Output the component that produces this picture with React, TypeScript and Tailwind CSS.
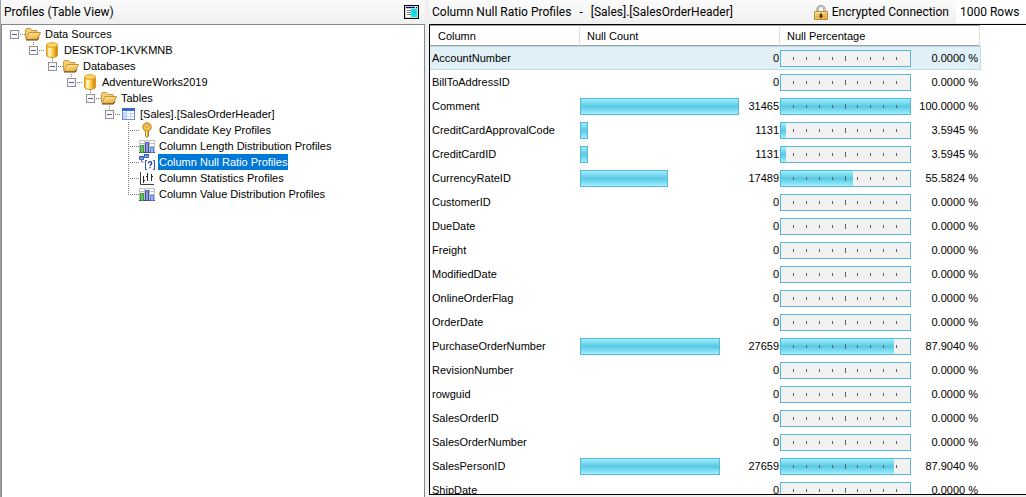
import { useState, type ReactNode } from 'react';

type IconName = 'folder' | 'database' | 'table' | 'key' | 'chart' | 'null' | 'stats';

type Node = { label: string; icon: IconName; children?: Node[] };

const tree: Node = {
  label: 'Data Sources',
  icon: 'folder',
  children: [
    {
      label: 'DESKTOP-1KVKMNB',
      icon: 'database',
      children: [
        {
          label: 'Databases',
          icon: 'folder',
          children: [
            {
              label: 'AdventureWorks2019',
              icon: 'database',
              children: [
                {
                  label: 'Tables',
                  icon: 'folder',
                  children: [
                    {
                      label: '[Sales].[SalesOrderHeader]',
                      icon: 'table',
                      children: [
                        { label: 'Candidate Key Profiles', icon: 'key' },
                        { label: 'Column Length Distribution Profiles', icon: 'chart' },
                        { label: 'Column Null Ratio Profiles', icon: 'null' },
                        { label: 'Column Statistics Profiles', icon: 'stats' },
                        { label: 'Column Value Distribution Profiles', icon: 'chart' },
                      ],
                    },
                  ],
                },
              ],
            },
          ],
        },
      ],
    },
  ],
};

const TOTAL = 31465;

const columns: [string, number, string][] = [
  ['AccountNumber', 0, '0.0000'],
  ['BillToAddressID', 0, '0.0000'],
  ['Comment', 31465, '100.0000'],
  ['CreditCardApprovalCode', 1131, '3.5945'],
  ['CreditCardID', 1131, '3.5945'],
  ['CurrencyRateID', 17489, '55.5824'],
  ['CustomerID', 0, '0.0000'],
  ['DueDate', 0, '0.0000'],
  ['Freight', 0, '0.0000'],
  ['ModifiedDate', 0, '0.0000'],
  ['OnlineOrderFlag', 0, '0.0000'],
  ['OrderDate', 0, '0.0000'],
  ['PurchaseOrderNumber', 27659, '87.9040'],
  ['RevisionNumber', 0, '0.0000'],
  ['rowguid', 0, '0.0000'],
  ['SalesOrderID', 0, '0.0000'],
  ['SalesOrderNumber', 0, '0.0000'],
  ['SalesPersonID', 27659, '87.9040'],
  ['ShipDate', 0, '0.0000'],
];

function Gradients() {
  return (
    <svg className="absolute size-0" aria-hidden="true">
      <defs>
        <linearGradient id="gold" x1="0" x2="1">
          <stop offset="0" stopColor="#f0a818" />
          <stop offset="0.35" stopColor="#fff0a0" />
          <stop offset="0.65" stopColor="#f8bc30" />
          <stop offset="1" stopColor="#c87808" />
        </linearGradient>
        <linearGradient id="leaf" x1="0" y1="0" x2="0.4" y2="1">
          <stop offset="0" stopColor="#fff0a0" />
          <stop offset="1" stopColor="#eeb040" />
        </linearGradient>
      </defs>
    </svg>
  );
}

const drawings: Record<IconName, ReactNode> = {
  folder: (
    <>
      <path d="M.5 12.500V3.500l1-1h4l1.500 2h5v3" fill="#f3cf72" stroke="#c89a4a" />
      <path d="M1 13.500 4 6.500h11.500l-3 7z" fill="url(#leaf)" stroke="#c8923a" />
      <path d="M1 14h11.500l1.200-2.500" fill="none" stroke="#5a4018" />
    </>
  ),
  database: (
    <>
      <path d="M2.500 3v10c0 3.300 11 3.300 11 0V3z" fill="url(#gold)" stroke="#e09a28" />
      <ellipse cx="8" cy="3" rx="5.500" ry="2.300" fill="#fbd768" stroke="#e0a030" />
      <path d="M5 6v8" stroke="#fff8cc" strokeWidth="1.500" />
    </>
  ),
  table: (
    <>
      <rect x="2.500" y="2.500" width="12" height="11" fill="#fff" stroke="#6a8fd8" />
      <path d="M2 2h13v3H2z" fill="#3c67c8" />
      <path d="M3 6h3v7H3z" fill="#c4d6f8" />
      <path d="M3 7.500h11M3 10.500h11M6.500 5v8M10.500 5v8" stroke="#c4d4f4" />
    </>
  ),
  key: (
    <>
      <path d="M6.500 8h3v6l-1.500 1.500L6.500 14z" fill="#f0b028" stroke="#94681c" strokeWidth=".8" />
      <circle cx="8" cy="5" r="4.200" fill="#f8c440" stroke="#b88020" />
      <circle cx="8" cy="3.800" r="1.300" fill="#fff" stroke="#94681c" strokeWidth=".6" />
      <path d="M7.500 9v5" stroke="#fff0a0" />
    </>
  ),
  chart: (
    <>
      <path d="M0 2h16v13H0z" fill="#fff" />
      <path d="M0 2.500h16M0 5.500h16M0 8.500h16M0 11.500h16M.5 2v12M5.500 2v12M10.500 2v12M15.500 2v12" stroke="#c0c0c8" />
      <path d="M0 14.500h16" stroke="#404048" />
      <path d="M1.500 7.500h3v7h-3z" fill="#68c860" stroke="#38983c" />
      <path d="M6.500 4.500h3v10h-3z" fill="#8498e0" stroke="#4450a8" />
      <path d="M11.500 9.500h3v5h-3z" fill="#98bcff" stroke="#5878cc" />
    </>
  ),
  null: (
    <>
      <path d="M5.500 .5h4v3h-4zM.5 2.500h4v3h-4z" fill="#88b0f0" stroke="#3860b0" />
      <path d="M5 1h5M0 3h5" stroke="#3860b0" />
      <path d="M2.500 6v2h2" fill="none" stroke="#6080b8" />
      <path d="M8 6.500H6.500v9H8M14 6.500h1.500v9H14" fill="none" stroke="#3058b0" />
      <path d="M9.500 9.200c0-2 3.200-2 3.200 0 0 1.300-1.700 1.200-1.700 2.800M11 13v1.200" fill="none" stroke="#2040a0" strokeWidth="1.300" />
    </>
  ),
  stats: (
    <>
      <path d="M1.500 2v12.500H15" fill="none" stroke="#404048" />
      <path d="M4.500 6v7M8.500 3v8M12.500 4v7" stroke="#282830" />
      <path d="M4 10.500h2M7 6.500h2M12 6.500h2" stroke="#282830" />
    </>
  ),
};

function Icon({ name }: { name: IconName }) {
  return (
    <svg viewBox="0 0 16 16" className="size-4 shrink-0" aria-hidden="true">
      {drawings[name]}
    </svg>
  );
}

const dots = { stroke: '#808080', strokeDasharray: '1 1' };

function TreeNode({
  node,
  depth,
  last,
  selected,
  onSelect,
}: {
  node: Node;
  depth: number;
  last: boolean;
  selected: string;
  onSelect: (label: string) => void;
}) {
  const [open, setOpen] = useState(true);
  const active = selected === node.label;
  return (
    <li role="treeitem" aria-selected={active} aria-expanded={node.children ? open : undefined}>
      <div className="flex h-4 items-center">
        {node.children ? (
          <button
            type="button"
            aria-label={`${open ? 'Collapse' : 'Expand'} ${node.label}`}
            onClick={() => setOpen(!open)}
            className="h-4 w-[19px] shrink-0"
          >
            <svg viewBox="0 0 19 16" className="h-4 w-[19px]" shapeRendering="crispEdges">
              {depth > 0 && <path d="M8.500 0v4" {...dots} />}
              <path d="M14 8.500h5" {...dots} />
              <rect x="4.500" y="4.500" width="8" height="8" fill="#f8f8f8" stroke="#919191" />
              <path d={open ? 'M6 8.500h5' : 'M6 8.500h5M8.500 6v5'} stroke="#4b63a7" />
            </svg>
          </button>
        ) : (
          <svg viewBox="0 0 19 16" className="h-4 w-[19px] shrink-0" shapeRendering="crispEdges" aria-hidden="true">
            <path d={last ? 'M8.500 0v9' : 'M8.500 0v16'} {...dots} />
            <path d="M10 8.500h9" {...dots} />
          </svg>
        )}
        <Icon name={node.icon} />
        <button
          type="button"
          onClick={() => onSelect(node.label)}
          className={
            active
              ? 'ml-[3px] h-4 bg-[#0078d7] px-px leading-4 whitespace-nowrap text-white'
              : 'ml-[3px] h-4 px-px leading-4 whitespace-nowrap'
          }
        >
          {node.label}
        </button>
      </div>
      {node.children && open && (
        <ul role="group" className="ml-[19px]">
          {node.children.map((child, i) => (
            <TreeNode
              key={child.label}
              node={child}
              depth={depth + 1}
              last={i === node.children!.length - 1}
              selected={selected}
              onSelect={onSelect}
            />
          ))}
        </ul>
      )}
    </li>
  );
}

function CountBar({ count }: { count: number }) {
  return (
    <div className="flex h-[17px] items-center">
      <div className="h-full w-4/5 shrink-0">
        {count > 0 && (
          <div
            className="h-full min-w-2 border border-[#5ab8d6] bg-linear-to-b from-[#9cf0fc] via-[#58c8e4] to-[#9cf0fc]"
            style={{ width: `${(count / TOTAL) * 100}%` }}
          />
        )}
      </div>
      <span className="flex-1 text-right">{count}</span>
    </div>
  );
}

function PercentBar({ percent }: { percent: string }) {
  return (
    <div className="flex h-[17px] items-center">
      <div className="grid h-full w-[131px] shrink-0 border border-[#5ab8d6] bg-[#f2f2f2]">
        <div
          className="col-start-1 row-start-1 bg-linear-to-b from-[#9cf0fc] via-[#58c8e4] to-[#9cf0fc]"
          style={{ width: `${percent}%` }}
        />
        <svg viewBox="0 0 129 15" className="col-start-1 row-start-1 h-[15px] w-[129px]" shapeRendering="crispEdges" aria-hidden="true">
          <path
            d="M12.500 6v3M25.500 6v3M38.500 6v3M51.500 6v3M64.500 5v5M76.500 6v3M89.500 6v3M102.500 6v3M115.500 6v3"
            stroke="#606060"
          />
        </svg>
      </div>
      <span className="flex-1 pr-0.5 text-right">{percent} %</span>
    </div>
  );
}

export default function App() {
  const [selected, setSelected] = useState('Column Null Ratio Profiles');
  return (
    <div className="flex h-screen overflow-hidden bg-[#f0f0f0] font-['Liberation_Sans',Arial,sans-serif] text-[11px] leading-4 text-black">
      <Gradients />
      <section className="flex w-[425px] shrink-0 flex-col border-l border-[#a0a0a0]">
        <header className="flex h-6 items-center justify-between bg-linear-to-b from-[#fbfbfb] to-[#f0f0f0] pr-1.5 pl-[3px] font-[Roboto,sans-serif] text-xs">
          <h1>Profiles (Table View)</h1>
          <button type="button" aria-label="Toggle view">
            <svg viewBox="0 0 15 14" className="h-3.5 w-[15px]" shapeRendering="crispEdges">
              <path d="M0 0h15v14H0z" fill="#000" />
              <path d="M1 1h13v12H1z" fill="#d0d0d0" />
              <path d="M2 2h11v1H2z" fill="#0000a0" />
              <path d="M11 2h1v1h-1z" fill="#fff" />
              <path d="M2 4h5v8H2z" fill="#fff" />
              <path d="M7 4h6v8H7z" fill="#00f0f8" />
              <path d="M3 5.500h4M3 7.500h4M3 9.500h4" stroke="#808080" />
              <path d="M9 5.500h2M9 7.500h3M9 9.500h2" stroke="#40a8b0" />
            </svg>
          </button>
        </header>
        <div className="flex-1 overflow-hidden border border-b-0 border-[#828790] bg-white pt-px pl-1">
          <ul role="tree" aria-label="Profiles">
            <TreeNode node={tree} depth={0} last selected={selected} onSelect={setSelected} />
          </ul>
        </div>
      </section>

      <section className="ml-1 flex min-w-0 flex-1 flex-col pb-0.5">
        <header className="flex h-6 shrink-0 items-center bg-linear-to-b from-[#fbfbfb] to-[#f0f0f0] pl-[3px] font-[Roboto,sans-serif] text-xs whitespace-nowrap">
          <h2 className="flex gap-2">
            <span>Column Null Ratio Profiles</span>
            <span>-</span>
            <span>[Sales].[SalesOrderHeader]</span>
          </h2>
          <div className="ml-auto flex items-center gap-1 pr-[7px]">
            <svg viewBox="0 0 14 15" className="h-[15px] w-3.5" aria-hidden="true">
              <path d="M3.500 8V4.500a3.500 3.500 0 0 1 7 0V8" fill="none" stroke="#909090" strokeWidth="2.200" />
              <path d="M3.500 8V4.500a3.500 3.500 0 0 1 7 0V8" fill="none" stroke="#d0d0d0" />
              <rect x=".5" y="6.500" width="13" height="8" rx=".5" fill="url(#leaf)" stroke="#b88840" />
              <path d="M2 9.500h10M2 11.500h10" stroke="#e0a850" />
              <path d="M6 8.500h2v2h1v1H8v1.500H6v-1.500H5v-1h1z" fill="#503810" />
            </svg>
            <span>Encrypted Connection</span>
          </div>
          <input
            aria-label="Row limit"
            defaultValue="1000 Rows"
            className="h-[23px] w-[70px] self-start bg-white pl-1 outline-none"
          />
        </header>
        <div className="min-h-0 flex-1 overflow-hidden border border-r-0 border-black bg-white">
          <table className="w-[551px] table-fixed border-separate border-spacing-0">
            <thead>
              <tr className="h-[21px] text-left">
                <th className="w-[150px] border-y border-r border-y-[#a0a0a0] border-r-[#e0e0e0] p-0 pl-2 font-normal">Column</th>
                <th className="w-[200px] border-y border-r border-y-[#a0a0a0] border-r-[#e0e0e0] p-0 pl-[7px] font-normal">Null Count</th>
                <th className="w-[200px] border-y border-r border-y-[#a0a0a0] border-r-[#e0e0e0] p-0 pl-[7px] font-normal">Null Percentage</th>
                <th className="w-px p-0" />
              </tr>
            </thead>
            <tbody>
              {columns.map(([name, count, percent]) => (
                <tr
                  key={name}
                  className="h-6 first:bg-[#e0f0f6] first:*:border-y first:*:border-[#b8dce8] first:*:last:border-r"
                >
                  <td className="p-0 pl-0.5">{name}</td>
                  <td className="p-0 pr-px">
                    <CountBar count={count} />
                  </td>
                  <td className="p-0">
                    <PercentBar percent={percent} />
                  </td>
                  <td className="p-0" />
                </tr>
              ))}
            </tbody>
          </table>
        </div>
      </section>
    </div>
  );
}
